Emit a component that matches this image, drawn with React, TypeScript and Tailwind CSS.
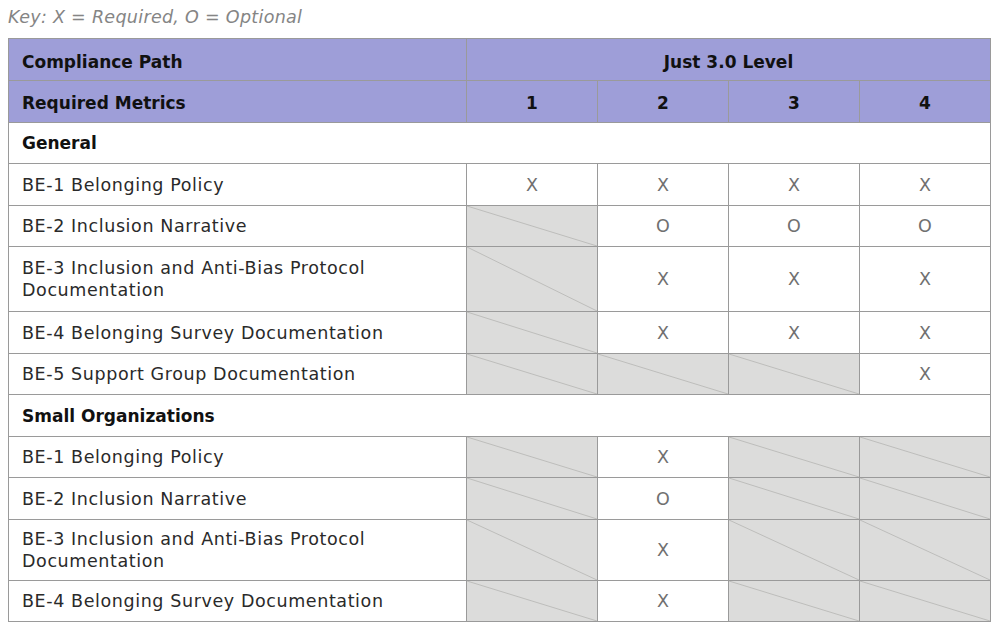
import React from "react";

type Cell = "X" | "O" | "-";

const rows: ({ section: string; h: string } | { label: string; cells: Cell[]; h: string })[] = [
  { section: "General", h: "h-[41px]" },
  { label: "BE-1 Belonging Policy", cells: ["X", "X", "X", "X"], h: "h-[42px]" },
  { label: "BE-2 Inclusion Narrative", cells: ["-", "O", "O", "O"], h: "h-[41px]" },
  { label: "BE-3 Inclusion and Anti-Bias Protocol Documentation", cells: ["-", "X", "X", "X"], h: "h-[65px]" },
  { label: "BE-4 Belonging Survey Documentation", cells: ["-", "X", "X", "X"], h: "h-[42px]" },
  { label: "BE-5 Support Group Documentation", cells: ["-", "-", "-", "X"], h: "h-[41px]" },
  { section: "Small Organizations", h: "h-[42px]" },
  { label: "BE-1 Belonging Policy", cells: ["-", "X", "-", "-"], h: "h-[41px]" },
  { label: "BE-2 Inclusion Narrative", cells: ["-", "O", "-", "-"], h: "h-[42px]" },
  { label: "BE-3 Inclusion and Anti-Bias Protocol Documentation", cells: ["-", "X", "-", "-"], h: "h-[61px]" },
  { label: "BE-4 Belonging Survey Documentation", cells: ["-", "X", "-", "-"], h: "h-[41px]" },
];

function Slash() {
  return (
    <svg className="absolute inset-0 h-full w-full" preserveAspectRatio="none" viewBox="0 0 100 100">
      <line x1="0" y1="0" x2="100" y2="100" stroke="#bdbdbb" strokeWidth="1" vectorEffect="non-scaling-stroke" />
    </svg>
  );
}

export default function App() {
  const font = { fontFamily: '"DejaVu Sans", "Noto Sans", sans-serif' };
  return (
    <div className="bg-white w-[1000px] h-[631px] pl-[8px] pt-[5px]" style={font}>
      <div className="text-[17.5px] italic text-[#858585] leading-[24px] h-[33px] tracking-[0.3px]">
        Key: X = Required, O = Optional
      </div>
      <table className="border-collapse w-[982px] table-fixed text-[17.5px] leading-[22px] tracking-[0.6px]">
        <colgroup>
          <col className="w-[458px]" />
          <col className="w-[131px]" />
          <col className="w-[131px]" />
          <col className="w-[131px]" />
          <col className="w-[131px]" />
        </colgroup>
        <thead>
          <tr className="bg-[#9e9ed8] h-[42px]">
            <th className="border border-[#9a9a9a] px-[13px] pt-[4px] text-left font-bold text-[17px] tracking-normal text-[#111]">
              Compliance Path
            </th>
            <th colSpan={4} className="border border-[#9a9a9a] pt-[4px] text-center font-bold text-[17px] tracking-normal text-[#111]">
              Just 3.0 Level
            </th>
          </tr>
          <tr className="bg-[#9e9ed8] h-[42px]">
            <th className="border border-[#9a9a9a] px-[13px] pt-[2px] text-left font-bold text-[17px] tracking-normal text-[#111]">
              Required Metrics
            </th>
            {["1", "2", "3", "4"].map((n) => (
              <th key={n} className="border border-[#9a9a9a] pt-[2px] text-center font-bold text-[17px] tracking-normal text-[#111]">
                {n}
              </th>
            ))}
          </tr>
        </thead>
        <tbody>
          {rows.map((r, i) =>
            "section" in r ? (
              <tr key={i} className={r.h}>
                <td colSpan={5} className="border border-[#9a9a9a] px-[13px] font-bold text-[17px] tracking-normal text-[#111]">
                  {r.section}
                </td>
              </tr>
            ) : (
              <tr key={i} className={r.h}>
                <td className="border border-[#9a9a9a] px-[13px] py-[7px] text-[#2a2a2a]">{r.label}</td>
                {r.cells.map((c, j) =>
                  c === "-" ? (
                    <td key={j} className="relative border border-[#9a9a9a] bg-[#dcdcdb] p-0">
                      <Slash />
                    </td>
                  ) : (
                    <td key={j} className="border border-[#9a9a9a] text-center text-[#707070] font-normal tracking-normal">
                      {c}
                    </td>
                  )
                )}
              </tr>
            )
          )}
        </tbody>
      </table>
    </div>
  );
}
